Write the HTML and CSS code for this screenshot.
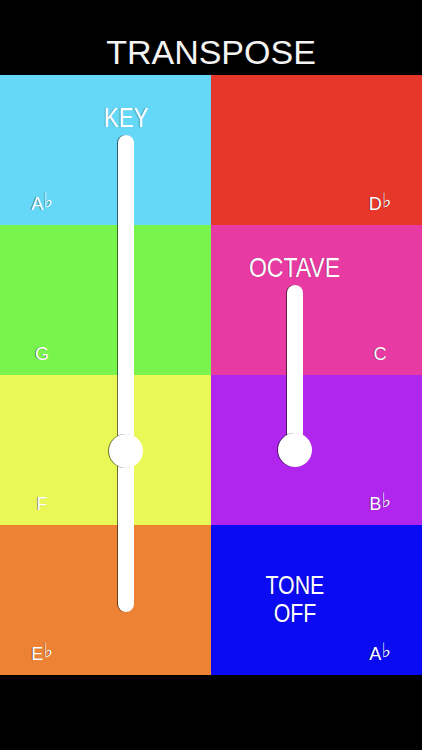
FILE: index.html
```html
<!DOCTYPE html>
<html>
<head>
<meta charset="utf-8">
<link rel="stylesheet" href="styles.css">
</head>
<body>
<div class="app">
  <header class="header"><h1 class="title">TRANSPOSE</h1></header>
  <main class="board">
    <div class="cell c-blue"><span class="note">A<span class="flat">♭</span></span></div>
    <div class="cell c-red right"><span class="note">D<span class="flat">♭</span></span></div>
    <div class="cell c-green"><span class="note">G</span></div>
    <div class="cell c-magenta right"><span class="note">C</span></div>
    <div class="cell c-yellow"><span class="note">F</span></div>
    <div class="cell c-purple right"><span class="note">B<span class="flat">♭</span></span></div>
    <div class="cell c-orange"><span class="note">E<span class="flat">♭</span></span></div>
    <div class="cell c-navy right tone-cell">
      <div class="tone"><span class="cond">TONE</span><span class="cond">OFF</span></div>
      <span class="note">A<span class="flat">♭</span></span>
    </div>

    <div class="control key-control">
      <span class="label key-label cond">KEY</span>
      <div class="track key-track"><div class="knob key-knob"></div></div>
    </div>
    <div class="control octave-control">
      <span class="label octave-label cond">OCTAVE</span>
      <div class="track octave-track"><div class="knob octave-knob"></div></div>
    </div>
  </main>
  <footer class="footer"></footer>
</div>
</body>
</html>
```
FILE: styles.css
```css
html, body {
  margin: 0;
  padding: 0;
  background: #000;
}
body {
  font-family: "Liberation Sans", Arial, sans-serif;
  color: #fff;
}
.app {
  width: 422px;
  height: 750px;
  display: flex;
  flex-direction: column;
  background: #000;
}
.header {
  height: 75px;
  box-sizing: border-box;
  padding-top: 35px;
}
.title {
  margin: 0;
  font-weight: normal;
  font-size: 34px;
  line-height: 34px;
  text-align: center;
  color: #f4f4f4;
}
.board {
  position: relative;
  display: grid;
  grid-template-columns: 211px 211px;
  grid-template-rows: repeat(4, 150px);
}
.cell {
  display: flex;
  align-items: flex-end;
  box-sizing: border-box;
  padding-bottom: 12px;
}
.c-blue { background: #65d8f8; }
.c-red { background: #e7372a; }
.c-green { background: #78f44c; }
.c-magenta { background: #e73aa2; }
.c-yellow { background: #e9f857; }
.c-purple { background: #b026ee; }
.c-orange { background: #ee8234; }
.c-navy { background: #0b0bf3; }

.note {
  display: block;
  width: 84px;
  text-align: center;
  font-size: 18px;
  line-height: 18px;
  color: #fff;
  text-shadow: -1px 0 0 rgba(0,0,0,0.45);
}
.right .note {
  margin-left: auto;
}
.flat {
  font-family: "DejaVu Sans", sans-serif;
  font-weight: bold;
  font-size: 20px;
  line-height: 10px;
  position: relative;
  top: -3px;
}
.cond {
  display: inline-block;
  transform: scaleX(0.82);
}
.tone-cell {
  flex-direction: column;
  align-items: stretch;
  justify-content: space-between;
  padding-top: 46px;
}
.tone {
  width: 168px;
  display: flex;
  flex-direction: column;
  align-items: center;
  font-size: 26px;
  line-height: 28px;
  text-shadow: -1px 0 0 rgba(0,0,0,0.35);
}

.control {
  position: absolute;
  display: flex;
  flex-direction: column;
  align-items: center;
  width: 120px;
}
.key-control {
  left: 66px;
  top: 30px;
}
.octave-control {
  left: 234.5px;
  top: 179px;
}
.label {
  color: #fff;
  text-shadow: -1px 0 0 rgba(0,0,0,0.35);
  white-space: nowrap;
}
.key-label {
  font-size: 27px;
  line-height: 27px;
}
.octave-label {
  font-size: 28px;
  line-height: 28px;
}
.track {
  position: relative;
  width: 16px;
  background: #fff;
  border-radius: 8px;
  box-shadow: -1px 0 0 rgba(0,0,0,0.55);
  margin-top: 3px;
}
.key-track {
  height: 477px;
}
.octave-track {
  height: 165px;
}
.knob {
  position: absolute;
  left: -9px;
  width: 34px;
  height: 34px;
  border-radius: 50%;
  background: #fff;
  box-shadow: -1px 0 0 rgba(0,0,0,0.55);
}
.key-knob {
  top: 299px;
}
.octave-knob {
  bottom: -17px;
}
.footer {
  height: 75px;
  background: #000;
}
```
